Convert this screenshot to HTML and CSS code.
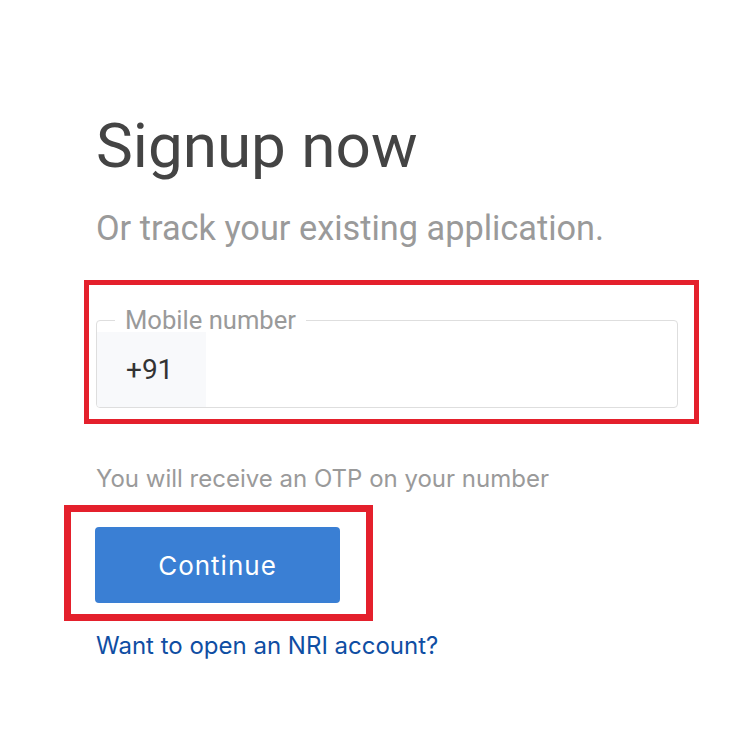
FILE: index.html
```html
<!DOCTYPE html>
<html lang="en">
<head>
<meta charset="utf-8">
<title>Signup now</title>
<link rel="stylesheet" href="styles.css">
</head>
<body>
<main class="page">
  <h1 class="title">Signup now</h1>
  <p class="subtitle">Or track your existing application.</p>
  <div class="mark mark-field">
    <fieldset class="field">
      <legend class="field-label">Mobile number</legend>
      <div class="field-row">
        <span class="prefix">+91</span>
        <input class="field-input" type="tel" aria-label="Mobile number">
      </div>
    </fieldset>
  </div>
  <p class="hint">You will receive an OTP on your number</p>
  <div class="mark mark-btn">
    <button class="btn" type="button">Continue</button>
  </div>
  <a class="link" href="#">Want to open an NRI account?</a>
</main>
</body>
</html>
```
FILE: styles.css
```css
html, body {
  margin: 0;
  padding: 0;
  background: #ffffff;
}
body {
  font-family: Inter, "Noto Sans", sans-serif;
}
.page {
  padding: 110px 0 0 96px;
  display: flex;
  flex-direction: column;
  align-items: flex-start;
}
.title {
  margin: 0;
  font-family: Roboto, "Liberation Sans", sans-serif;
  font-weight: 400;
  font-size: 62px;
  line-height: 72px;
  color: #444444;
}
.subtitle {
  margin: 26px 0 0;
  font-family: Roboto, "Liberation Sans", sans-serif;
  font-size: 34.3px;
  line-height: 40px;
  color: #9a9a9a;
}
.mark {
  border-style: solid;
  border-color: #e4202c;
  box-sizing: border-box;
}
.mark-field {
  margin: 32px 0 0 -12px;
  border-width: 5px;
  width: 615px;
  padding: 23px 16px 11px 7px;
}
.field {
  margin: 0;
  padding: 0;
  border: 1px solid #dedede;
  border-radius: 4px;
  min-width: 0;
}
.field-label {
  margin-left: 18px;
  padding: 0 10px;
  font-family: Roboto, "Liberation Sans", sans-serif;
  font-size: 25.6px;
  line-height: 24px;
  color: #9a9a9a;
}
.field-row {
  display: flex;
  height: 75px;
}
.prefix {
  width: 109px;
  box-sizing: border-box;
  padding-left: 29px;
  background: #f8f9fb;
  display: flex;
  align-items: center;
  font-family: Roboto, "Liberation Sans", sans-serif;
  font-size: 28px;
  color: #333333;
  border-bottom-left-radius: 3px;
}
.field-input {
  flex: 1;
  border: 0;
  outline: none;
  background: transparent;
  font: inherit;
  min-width: 0;
}
.hint {
  margin: 40px 0 0;
  font-size: 24px;
  line-height: 30px;
  color: #9a9a9a;
}
.mark-btn {
  margin: 11px 0 0 -32px;
  border-width: 7px;
  padding: 15px 26px 11px 24px;
}
.btn {
  display: block;
  width: 245px;
  height: 76px;
  border: 0;
  border-radius: 4px;
  background: #3a7fd4;
  color: #ffffff;
  font-family: Inter, "Noto Sans", sans-serif;
  font-size: 26px;
  letter-spacing: 1px;
  cursor: pointer;
}
.link {
  margin-top: 10px;
  font-size: 24px;
  line-height: 30px;
  color: #0f4ea3;
  text-decoration: none;
}
```
